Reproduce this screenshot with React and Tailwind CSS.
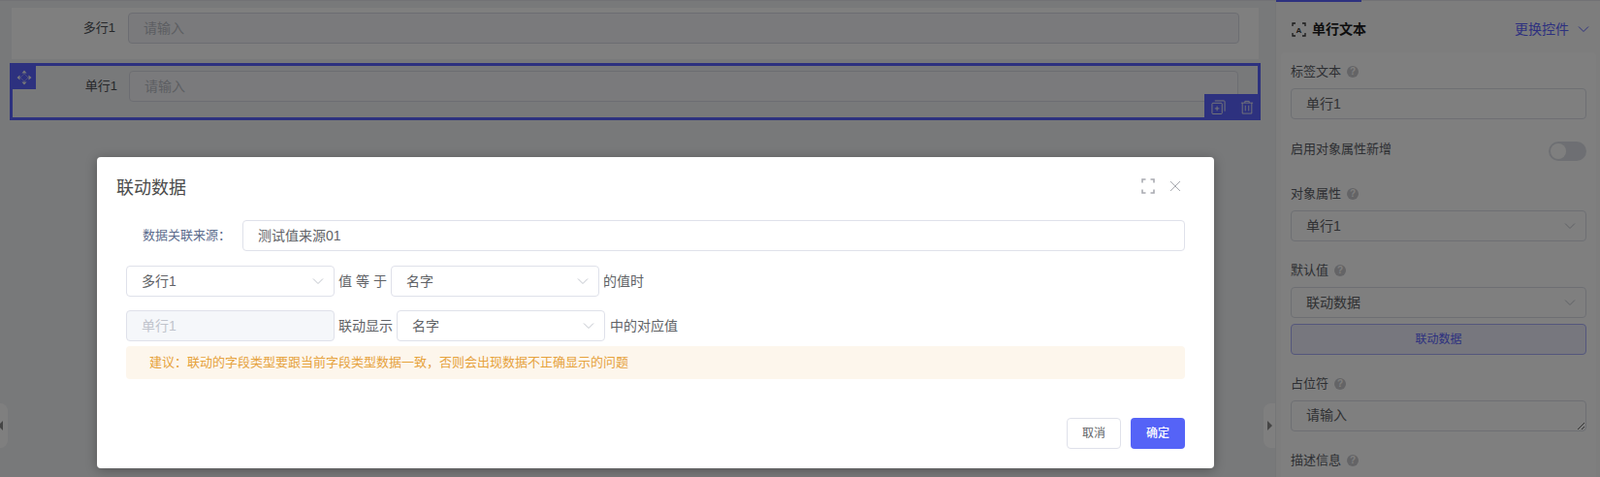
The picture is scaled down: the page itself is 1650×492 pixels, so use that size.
import React from "react";

const Chevron = ({ className = "" }) => (
  <svg viewBox="0 0 12 12" className={`w-3 h-3 shrink-0 ${className}`} fill="none" stroke="currentColor" strokeWidth="1">
    <path d="M1 3.5 L6 8.5 L11 3.5" />
  </svg>
);

const Help = () => (
  <span className="ml-[6px] w-[12px] h-[12px] rounded-full bg-[#c8c8cc] text-white text-[10px] leading-[12px] font-bold text-center inline-block">?</span>
);

const Select = ({ text, className = "" }) => (
  <div className={`h-[32px] w-[215px] shrink-0 flex items-center justify-between pl-[15px] pr-[10px] bg-white border border-[#dfe1ea] rounded-[4px] text-[14px] text-[#606266] ${className}`}>
    <span>{text}</span>
    <Chevron className="text-[#c0c4cc]" />
  </div>
);

const PanelLabel = ({ text, help = true, className = "" }) => (
  <div className={`flex items-center h-[18px] text-[13px] text-[#5b5e66] ${className}`}>
    {text}
    {help && <Help />}
  </div>
);

const PanelSelect = ({ text }) => (
  <div className="mt-[8px] h-[32px] flex items-center justify-between pl-[15px] pr-[10px] border border-[#dcdfe6] rounded-[4px] bg-white text-[14px] text-[#606266]">
    <span>{text}</span>
    <Chevron className="text-[#c0c4cc]" />
  </div>
);

const Handle = ({ side }) => (
  <div className={`h-[46px] bg-[#ffffff] flex items-center ${side === "left" ? "w-[8px] rounded-r-[8px] justify-start" : "w-[12px] rounded-l-[8px] justify-end pr-[3px]"}`}>
    <svg viewBox="0 0 5 10" className="w-[5px] h-[10px] text-[#8a8a8a]" fill="currentColor">
      {side === "left" ? <path d="M5 0 L0 5 L5 10 Z" transform="translate(-2 0)" /> : <path d="M0 0 L5 5 L0 10 Z" />}
    </svg>
  </div>
);

export default function App() {
  return (
    <div className="relative w-[1650px] h-[492px] overflow-hidden bg-[#f1f2f4] font-['Liberation_Sans','Noto_Sans_CJK_SC',sans-serif]">
      {/* Page beneath the mask */}
      <div className="flex h-full border-t border-[#e4e5ea]">
        <main className="relative w-[1315px] shrink-0 pl-[12px] pt-[7px] pr-[17px]">
          <div className="flex h-[53px] pt-[5px] pr-[20px] bg-white">
            <div className="w-[107px] text-right text-[13px] leading-[32px] text-[#4c4f55]">多行1</div>
            <div className="ml-[13px] flex-1 h-[32px] px-[15px] border border-[#d9dbe4] rounded-[4px] bg-[#f4f5f8] text-[14px] leading-[30px] text-[#b9bcc4]">请输入</div>
          </div>
          <div className="relative -mx-[2px] mt-[4px] h-[59px] border-[3px] border-[#5a62ff]">
            <div className="absolute left-0 top-0 w-[24px] h-[24px] bg-[#5a62ff] flex items-center justify-center">
              <svg viewBox="0 0 16 16" className="w-[16px] h-[16px] text-[#f2f2f2]" fill="currentColor">
                <path d="M8 0.5 L10.5 3.5 H5.5 Z M8 15.5 L5.5 12.5 H10.5 Z M0.5 8 L3.5 5.5 V10.5 Z M15.5 8 L12.5 10.5 V5.5 Z" />
                <path d="M8 4 L12 8 L8 12 L4 8 Z" fill="none" stroke="currentColor" strokeWidth="0.6" opacity="0.6" />
              </svg>
            </div>
            <div className="flex h-[53px] pt-[5px]">
              <div className="w-[108px] text-right text-[13px] leading-[32px] text-[#4c4f55]">单行1</div>
              <div className="ml-[12px] mr-[20px] flex-1 h-[32px] px-[15px] border border-[#d9dbe4] rounded-[4px] bg-[#f4f5f8] text-[14px] leading-[30px] text-[#b9bcc4]">请输入</div>
            </div>
            <div className="absolute -right-[3px] -bottom-[3px] w-[58px] h-[27px] bg-[#5a62ff] flex items-center justify-center gap-[15px] text-[#f2f2f2]">
              <svg viewBox="0 0 16 16" className="w-[15px] h-[15px]" fill="none" stroke="currentColor" strokeWidth="1">
                <rect x="1" y="3.5" width="11" height="12" rx="1" />
                <path d="M4 1 H14 a1 1 0 0 1 1 1 V12.5" />
                <path d="M6.5 7 V12 M4 9.5 H9" />
              </svg>
              <svg viewBox="0 0 16 16" className="w-[14px] h-[15px]" fill="none" stroke="currentColor" strokeWidth="1">
                <path d="M1 3 H15 M5.5 3 V1 H10.5 V3 M2.5 3 V15.5 H13.5 V3 M6 6 V12.5 M10 6 V12.5" />
              </svg>
            </div>
          </div>
          <div className="absolute left-0 top-[415px]"><Handle side="left" /></div>
          <div className="absolute right-0 top-[415px]"><Handle side="right" /></div>
        </main>

        <aside className="flex-1 min-w-0 bg-[#fafafa] border-l border-[#ebecef] relative">
          <div className="absolute left-0 -top-[1px] w-[88px] h-[2px] bg-[#5a62ff]" />
          <div className="h-[53px] pt-[5px] flex items-center justify-between pl-[16px] pr-[11px]">
            <div className="flex items-center gap-[6px] text-[14px] font-bold text-[#1c1c1c]">
              <svg viewBox="0 0 15 15" className="w-[15px] h-[15px] text-[#333]" fill="none" stroke="currentColor" strokeWidth="1.3">
                <path d="M4 1 H1 V4 M11 1 H14 V4 M1 11 V14 H4 M14 11 V14 H11" />
                <text x="7.5" y="10.5" textAnchor="middle" fontSize="8" fill="currentColor" stroke="none">A</text>
              </svg>
              单行文本
            </div>
            <div className="flex items-center gap-[9px] text-[14px] text-[#5a62ff]">
              更换控件
              <Chevron className="text-[#5a62ff]" />
            </div>
          </div>
          <div className="ml-[5px] mr-[4px] h-[500px] rounded-[4px] bg-white px-[10px] pt-[11px]">
            <PanelLabel text="标签文本" />
            <div className="mt-[8px] h-[32px] px-[15px] border border-[#dcdfe6] rounded-[4px] text-[14px] leading-[30px] text-[#606266]">单行1</div>
            <div className="mt-[22px] flex items-center justify-between h-[22px]">
              <PanelLabel text="启用对象属性新增" help={false} className="-mt-[4px]" />
              <div className="w-[39px] h-[20px] rounded-full bg-[#dcdfe6] flex items-center pl-[2px]">
                <div className="w-[16px] h-[16px] rounded-full bg-white" />
              </div>
            </div>
            <PanelLabel text="对象属性" className="mt-[24px]" />
            <PanelSelect text="单行1" />
            <PanelLabel text="默认值" className="mt-[21px]" />
            <PanelSelect text="联动数据" />
            <div className="mt-[6px] h-[32px] border border-[#a9adf8] rounded-[4px] bg-[#eeeffc] text-center text-[12px] leading-[30px] text-[#5a62ff]">联动数据</div>
            <PanelLabel text="占位符" className="mt-[21px]" />
            <textarea readOnly placeholder="请输入" className="mt-[8px] block w-full h-[32px] px-[15px] py-[2px] border border-[#dcdfe6] rounded-[4px] text-[14px] leading-[24px] placeholder:text-[#606266] outline-none" />
            <PanelLabel text="描述信息" className="mt-[21px]" />
          </div>
        </aside>
      </div>

      {/* Mask */}
      <div className="absolute inset-0 bg-black/50 pl-[100px] pt-[162px]">
        <div className="w-[1152px] h-[321px] bg-white rounded-[4px] shadow-[0_2px_12px_rgba(0,0,0,0.3)] px-[30px] flex flex-col">
          <div className="h-[65px] shrink-0 -ml-[10px] flex items-center justify-between text-[18px] text-[#4a4a4a]">
            <span>联动数据</span>
            <div className="flex items-center gap-[15px] -mt-[5px] pr-[4px] text-[#a9abb1]">
              <svg viewBox="0 0 14 16" className="w-[14px] h-[16px]" fill="none" stroke="currentColor" strokeWidth="1.6">
                <path d="M4.5 1 H1 V4.5 M9.5 1 H13 V4.5 M1 11.5 V15 H4.5 M13 11.5 V15 H9.5" />
              </svg>
              <svg viewBox="0 0 12 12" className="w-[12px] h-[12px]" fill="none" stroke="currentColor" strokeWidth="1">
                <path d="M1 1 L11 11 M11 1 L1 11" />
              </svg>
            </div>
          </div>
          <div className="flex items-center h-[32px]">
            <div className="w-[120px] pl-[17px] text-[13px] text-[#5b6b8c] whitespace-nowrap">数据关联来源：</div>
            <div className="flex-1 h-[32px] px-[15px] border border-[#dfe1ea] rounded-[4px] text-[14px] leading-[30px] text-[#606266]">测试值来源01</div>
          </div>
          <div className="flex items-center h-[32px] mt-[15px] text-[14px] text-[#606266] whitespace-nowrap">
            <Select text="多行1" />
            <span className="w-[58px] text-center">值 等 于</span>
            <Select text="名字" />
            <span className="ml-[4px]">的值时</span>
          </div>
          <div className="flex items-center h-[32px] mt-[14px] text-[14px] text-[#606266] whitespace-nowrap">
            <div className="h-[32px] w-[215px] shrink-0 flex items-center pl-[15px] bg-[#f5f7fa] border border-[#dfe1ea] rounded-[4px] text-[#c0c4cc]">单行1</div>
            <span className="ml-[4px]">联动显示</span>
            <Select text="名字" className="ml-[4px]" />
            <span className="ml-[5px]">中的对应值</span>
          </div>
          <div className="mt-[5px] h-[34px] rounded-[4px] bg-[#fdf6ec] pl-[24px] text-[13px] leading-[34px] text-[#e6a23c]">
            建议：联动的字段类型要跟当前字段类型数据一致，否则会出现数据不正确显示的问题
          </div>
          <div className="mt-[40px] flex justify-end gap-[10px]">
            <div className="w-[56px] h-[32px] border border-[#dfe1ea] rounded-[4px] text-center text-[12px] leading-[30px] text-[#606266]">取消</div>
            <div className="w-[56px] h-[32px] bg-[#5563f7] rounded-[4px] text-center text-[12px] leading-[32px] font-medium text-white">确定</div>
          </div>
        </div>
      </div>
    </div>
  );
}
